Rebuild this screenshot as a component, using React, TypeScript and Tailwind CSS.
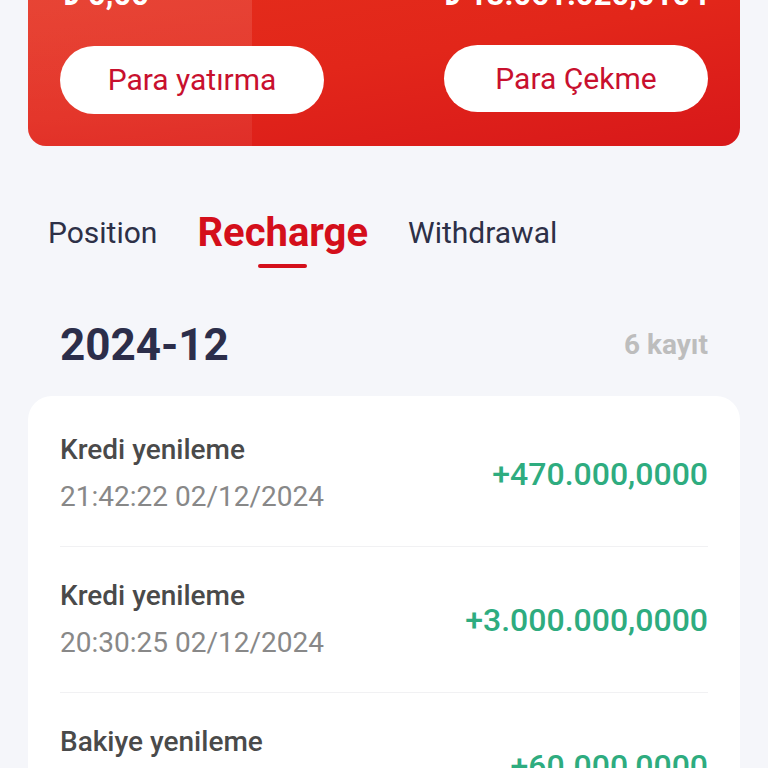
import React from "react";

const rows = [
  { title: "Kredi yenileme", date: "21:42:22 02/12/2024", amount: "+470.000,0000" },
  { title: "Kredi yenileme", date: "20:30:25 02/12/2024", amount: "+3.000.000,0000" },
  { title: "Bakiye yenileme", date: "19:12:40 02/12/2024", amount: "+60.000,0000" },
];

export default function App() {
  return (
    <div
      className="min-h-[768px] h-[768px] overflow-hidden bg-[#f5f6fa] px-[28px]"
      style={{ fontFamily: "Roboto, 'Noto Sans', sans-serif" }}
    >
      {/* Red balance card */}
      <div className="relative mt-[-60px] overflow-hidden rounded-[18px] bg-[linear-gradient(170deg,#e5301c_0%,#e2261a_55%,#d8181a_100%)] px-[32px] pb-[32px] pt-[39px]">
        <div className="pointer-events-none absolute left-[-1376px] top-[-1100px] h-[3000px] w-[1600px] rounded-full bg-[linear-gradient(180deg,rgba(255,255,255,0.13)_36%,rgba(255,255,255,0.10)_40%,rgba(255,255,255,0.06)_44%)]" />
        <div className="relative flex items-start justify-between text-[31px] font-bold leading-none text-white">
          <span className="pl-[2px]">₺ 0,00</span>
          <span>₺ 13.061.020,0104</span>
        </div>
        <div className="relative mt-[36px] flex items-center justify-between">
          <button className="flex h-[68px] w-[264px] items-center justify-center rounded-full bg-white text-[30px] leading-none text-[#c8102e]">
            Para yatırma
          </button>
          <button className="mt-[-3px] flex h-[67px] w-[264px] items-center justify-center rounded-full bg-white text-[30px] leading-none text-[#c8102e]">
            Para Çekme
          </button>
        </div>
      </div>

      {/* Tabs */}
      <div className="mt-[64px] flex items-start gap-[40px] pl-[20px]">
        <div className="flex h-[46px] items-center text-[30px] leading-none text-[#2d3047]">Position</div>
        <div className="flex flex-col items-center">
          <div className="flex h-[46px] items-center text-[40px] font-bold leading-none text-[#d40f1b]">Recharge</div>
          <div className="mt-[8px] h-[4px] w-[49px] rounded-full bg-[#d40f1b]" />
        </div>
        <div className="flex h-[46px] items-center text-[30px] leading-none text-[#2d3047]">Withdrawal</div>
      </div>

      {/* Month header */}
      <div className="mt-[47px] flex h-[60px] items-center justify-between px-[32px]">
        <div className="text-[44px] font-bold leading-none text-[#2c2e4a]">2024-12</div>
        <div className="text-[28px] font-bold leading-none text-[#bdbdbd]">6 kayıt</div>
      </div>

      {/* Records */}
      <div className="mt-[21px] rounded-[24px] bg-white px-[32px] pt-[5px]">
        {rows.map((r, i) => (
          <div
            key={i}
            className="flex items-center justify-between border-b border-[#f1f1f3] py-[31px]"
          >
            <div className="flex flex-col gap-[11px]">
              <div className="flex h-[36px] items-center text-[28px] font-medium leading-none text-[#4a4a4a]">
                {r.title}
              </div>
              <div className="flex h-[36px] items-center text-[28px] leading-none text-[#888888]">
                {r.date}
              </div>
            </div>
            <div className="text-[32px] font-medium leading-none text-[#2eac7f]">{r.amount}</div>
          </div>
        ))}
      </div>
    </div>
  );
}
